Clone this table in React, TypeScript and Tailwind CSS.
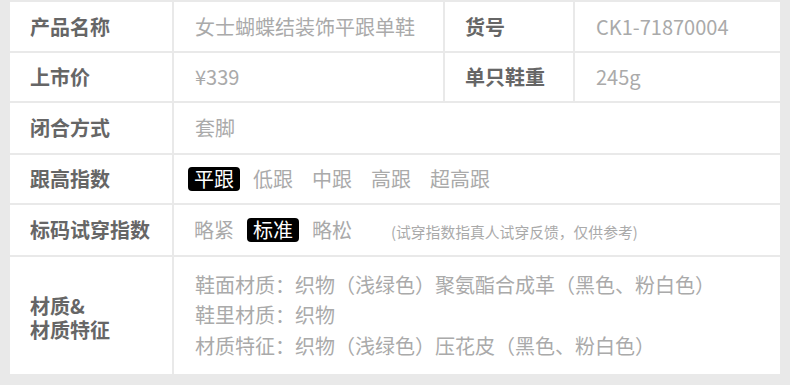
const font = { fontFamily: '"Noto Sans CJK SC", "Noto Sans", sans-serif' };

const heelOptions = ['平跟', '低跟', '中跟', '高跟', '超高跟'];
const fitOptions = ['略紧', '标准', '略松'];

function Label({ children }: { children: React.ReactNode }) {
  return (
    <div className="bg-white flex items-center pl-5 text-[20px] font-bold text-[#666666]">
      {children}
    </div>
  );
}

function Value({ children, className = '' }: { children: React.ReactNode; className?: string }) {
  return (
    <div className={`bg-white flex items-center pl-[21px] text-[20px] text-[#aaaaaa] ${className}`}>
      {children}
    </div>
  );
}

function Options({ items, active }: { items: string[]; active: string }) {
  return (
    <div className="flex items-center gap-[7px]">
      {items.map((item) =>
        item === active ? (
          <span key={item} className="bg-black text-white rounded-[4px] px-[6px] leading-[24px]">
            {item}
          </span>
        ) : (
          <span key={item} className="px-[6px] leading-[24px]">
            {item}
          </span>
        )
      )}
    </div>
  );
}

export default function App() {
  return (
    <div className="w-[790px] h-[385px] bg-[#e9e9e9] pt-[2px] pl-[10px]" style={font}>
      <div className="grid grid-cols-[162px_269px_128px_205px] grid-rows-[49px_48px_50px_48px_50px_117px] gap-[2px] w-[770px]">
        {/* row 1 */}
        <Label>产品名称</Label>
        <Value>女士蝴蝶结装饰平跟单鞋</Value>
        <Label>货号</Label>
        <Value>CK1-71870004</Value>

        {/* row 2 */}
        <Label>上市价</Label>
        <Value>¥339</Value>
        <Label>单只鞋重</Label>
        <Value>245g</Value>

        {/* row 3 */}
        <Label>闭合方式</Label>
        <Value className="col-span-3">套脚</Value>

        {/* row 4 */}
        <Label>跟高指数</Label>
        <Value className="col-span-3 !pl-[14px]">
          <Options items={heelOptions} active="平跟" />
        </Value>

        {/* row 5 */}
        <Label>标码试穿指数</Label>
        <Value className="col-span-3 !pl-[14px]">
          <Options items={fitOptions} active="标准" />
          <span className="ml-[33px] text-[14.8px] mt-[4px]">(试穿指数指真人试穿反馈，仅供参考)</span>
        </Value>

        {/* row 6 */}
        <div className="bg-white flex items-center pl-5 text-[20px] font-bold text-[#666666] leading-[24px] pt-[5px]">
          <div>
            <div>材质&amp;</div>
            <div>材质特征</div>
          </div>
        </div>
        <div className="col-span-3 bg-white flex flex-col justify-center pl-[21px] text-[20px] text-[#aaaaaa] leading-[30.5px]">
          <div>鞋面材质：织物（浅绿色）聚氨酯合成革（黑色、粉白色）</div>
          <div>鞋里材质：织物</div>
          <div>材质特征：织物（浅绿色）压花皮（黑色、粉白色）</div>
        </div>
      </div>
    </div>
  );
}
